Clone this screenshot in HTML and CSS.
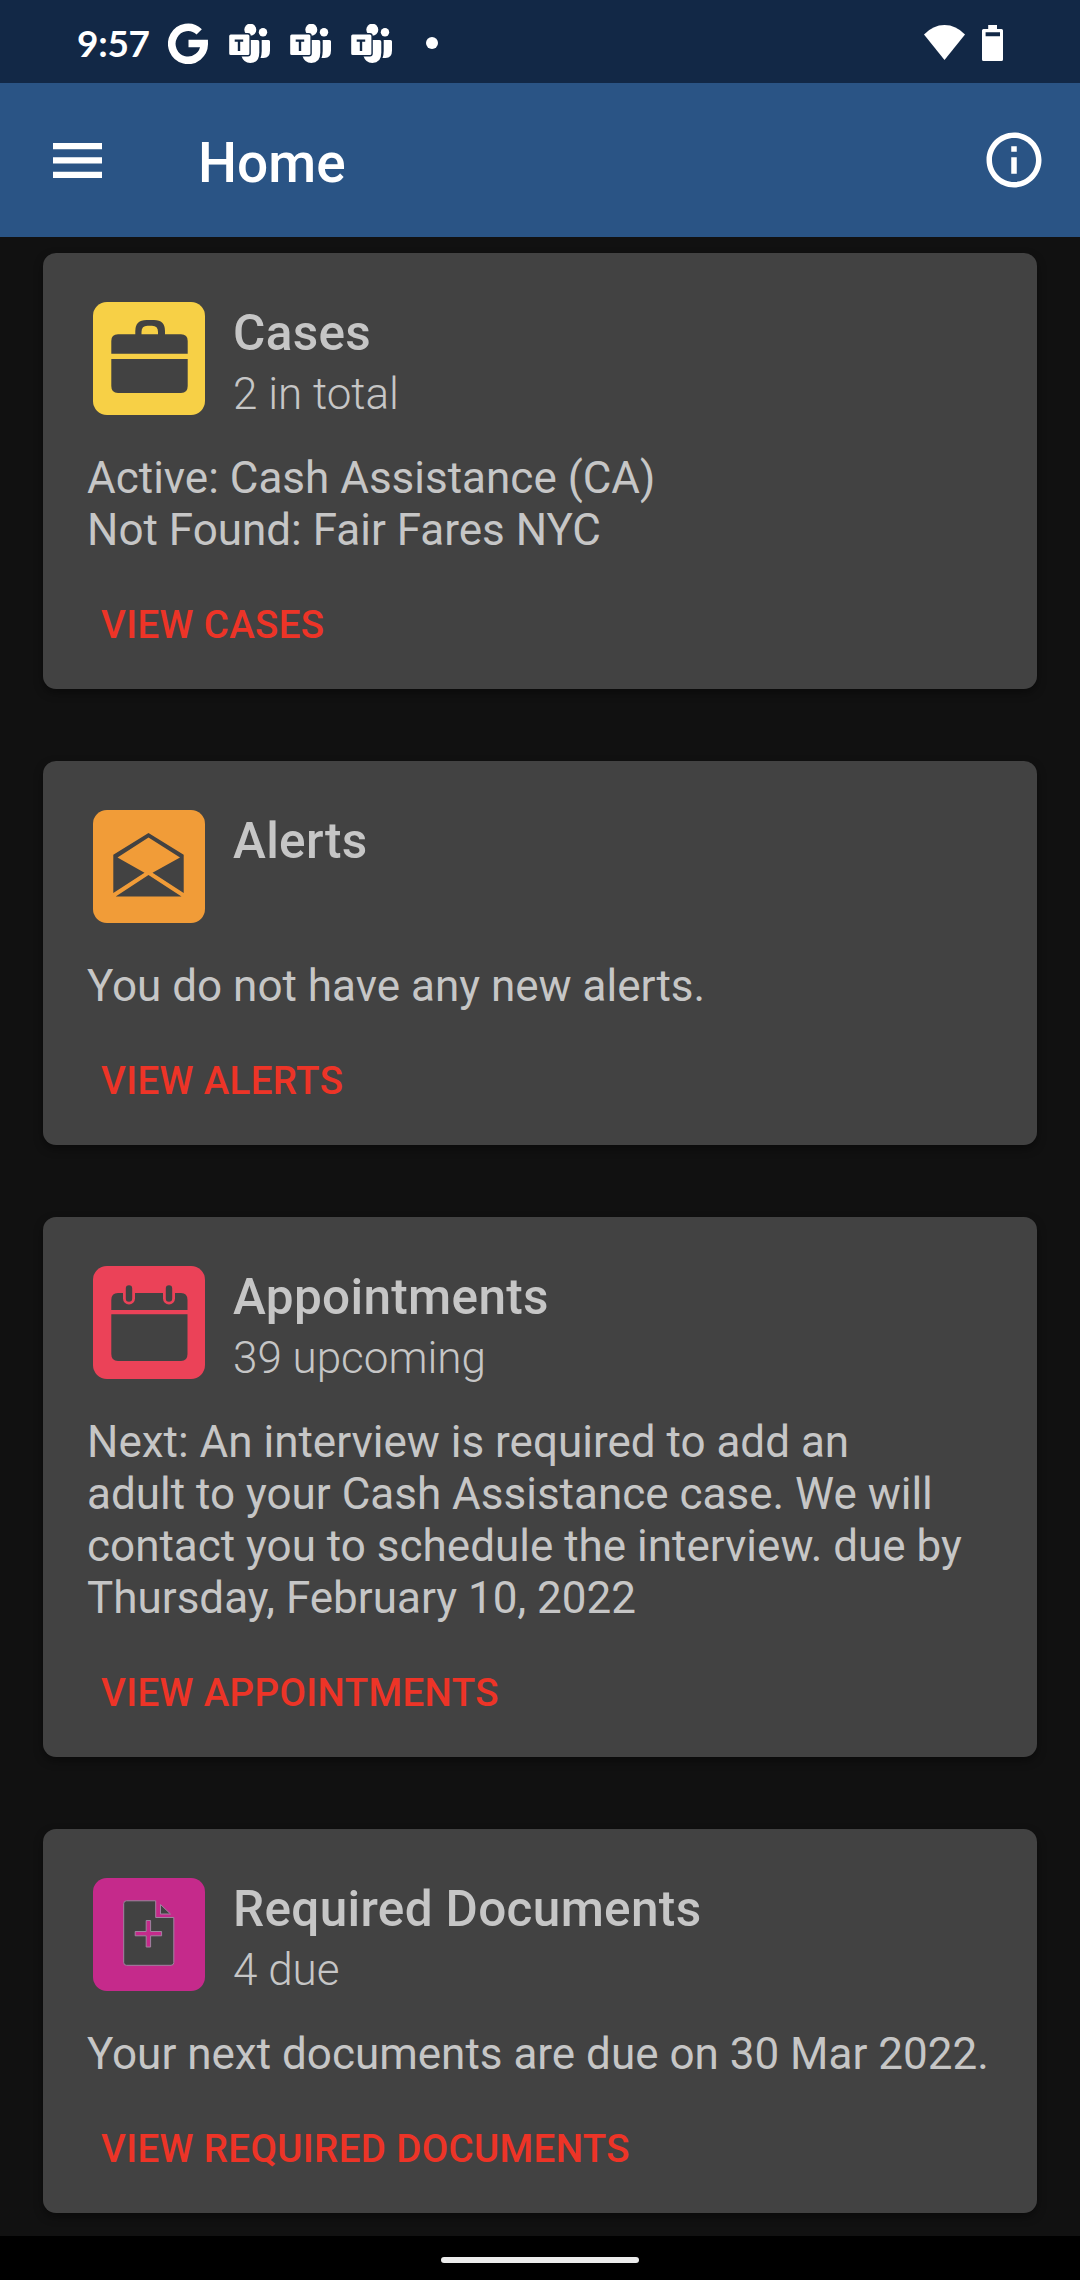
FILE: index.html
```html
<!DOCTYPE html>
<html lang="en">
<head>
<meta charset="utf-8">
<title>Home</title>
<link rel="stylesheet" href="styles.css">
</head>
<body>
<svg width="0" height="0" class="defs">
  <symbol id="teams" viewBox="0 0 41 39">
    <circle cx="21.3" cy="5.7" r="6"/>
    <circle cx="34" cy="8.2" r="4.2"/>
    <path d="M32.7 16H39.5Q41 16 41 17.5V26.5Q41 34 34.5 34H31.5Q32.7 31 32.7 27Z"/>
    <path d="M12 16H28.5Q30.3 16 30.3 17.8V28.5Q30.3 39 21.3 39Q14.5 39 12 31Z"/>
    <rect class="badge" x="-.5" y="9.8" width="21.6" height="22" rx="2.2"/>
    <path class="badge-mark" d="M5.7 16.6H14.2M10 16.6V27"/>
  </symbol>
</svg>
<div class="screen">
  <header class="status">
    <span class="time">9:57</span>
    <svg class="google" viewBox="0 0 40 41"><path d="M31.2 8.9A16.2 16.5 0 1 0 36.2 20.5H20.5"/></svg>
    <svg class="teams"><use href="#teams"/></svg>
    <svg class="teams"><use href="#teams"/></svg>
    <svg class="teams"><use href="#teams"/></svg>
    <span class="dot"></span>
    <svg class="wifi" viewBox="0 0 41 35"><path d="M0 9.5Q9 0 20.5 0T41 9.5L20.5 35Z"/></svg>
    <svg class="battery" viewBox="0 0 21 36"><path fill-rule="evenodd" d="M6.2 0H15V4H19.5Q21 4 21 5.5V34.5Q21 36 19.5 36H1.5Q0 36 0 34.5V5.5Q0 4 1.5 4H6.2ZM3.6 7.2V11.3H18V7.2Z"/></svg>
  </header>
  <nav class="appbar">
    <svg class="menu" viewBox="0 0 49 35"><path d="M0 0H49V6.3H0ZM0 14.3H49V20.6H0ZM0 28.7H49V35H0Z"/></svg>
    <h1>Home</h1>
    <svg class="info" viewBox="0 0 24 24"><path d="M11 7h2v2h-2zm0 4h2v6h-2zm1-9C6.480 2 2 6.480 2 12s4.480 10 10 10 10-4.480 10-10S17.520 2 12 2zm0 18c-4.410 0-8-3.590-8-8s3.590-8 8-8 8 3.590 8 8-3.590 8-8 8z"/></svg>
  </nav>
  <main class="cards">
    <section class="card">
      <div class="head">
        <svg class="icon" viewBox="0 0 112 113">
          <rect class="yellow" width="112" height="113" rx="14"/>
          <path class="cut" fill-rule="evenodd" d="M18.300 51.700V39Q18.300 32.300 25 32.300H42.300V29Q42.300 18 53.500 18H61Q72 18 72 29V32.300H88Q94.700 32.300 94.700 39V51.700ZM48.500 32.300H65V30Q65 23.700 59 23.700H54.500Q48.500 23.700 48.500 30ZM18.300 57H94.700V84Q94.700 91 88 91H25Q18.300 91 18.300 84Z"/>
        </svg>
        <div><h2>Cases</h2><p class="sub">2 in total</p></div>
      </div>
      <p class="text">Active: Cash Assistance (CA)<br>Not Found: Fair Fares NYC</p>
      <a class="action">VIEW CASES</a>
    </section>
    <section class="card">
      <div class="head">
        <svg class="icon" viewBox="0 0 112 113">
          <rect class="orange" width="112" height="113" rx="14"/>
          <path class="cut" d="M55.500 23 90.700 44.800V83L59.500 62.800 87 47.500 55.500 27.600 24.500 47.500 51.500 62.800 20.300 83V44.800ZM55.500 65 88.500 86.500H22.700Z"/>
        </svg>
        <div><h2>Alerts</h2></div>
      </div>
      <p class="text">You do not have any new alerts.</p>
      <a class="action">VIEW ALERTS</a>
    </section>
    <section class="card">
      <div class="head">
        <svg class="icon" viewBox="0 0 112 113">
          <rect class="pink" width="112" height="113" rx="14"/>
          <path class="cut" d="M18.300 44V34Q18.300 27 25 27H88Q94.500 27 94.500 34V44ZM18.300 48.300H94.500V88Q94.500 95 88 95H25Q18.300 95 18.300 88Z"/>
          <path class="ring-gap" d="M36 22.500V32.500M76 22.500V32.500"/>
          <path class="ring" d="M36 22.500V32.500M76 22.500V32.500"/>
        </svg>
        <div><h2>Appointments</h2><p class="sub">39 upcoming</p></div>
      </div>
      <p class="text">Next: An interview is required to add an<br>adult to your Cash Assistance case. We will<br>contact you to schedule the interview. due by<br>Thursday, February 10, 2022</p>
      <a class="action">VIEW APPOINTMENTS</a>
    </section>
    <section class="card">
      <div class="head">
        <svg class="icon" viewBox="0 0 112 113">
          <rect class="magenta" width="112" height="113" rx="14"/>
          <path class="cut outline" d="M33.500 22.800H62.700V39.500H80.800V84.500Q80.800 87.300 78 87.300H33.500Q30.700 87.300 30.700 84.500V25.600Q30.700 22.800 33.500 22.800ZM67.500 26.500 77.500 36H67.500Z"/>
          <path class="magenta outline" d="M53.200 42.500H57.600V53.500H68.600V57.800H57.600V69H53.200V57.800H42.200V53.500H53.200Z"/>
        </svg>
        <div><h2>Required Documents</h2><p class="sub">4 due</p></div>
      </div>
      <p class="text">Your next documents are due on 30 Mar 2022.</p>
      <a class="action">VIEW REQUIRED DOCUMENTS</a>
    </section>
  </main>
  <footer class="navbar"><span class="handle"></span></footer>
</div>
</body>
</html>
```
FILE: styles.css
```css
* { box-sizing: border-box; margin: 0; padding: 0; }
body { background: #111; font-family: Roboto, "Liberation Sans", sans-serif; color: #c6c6c6; }
.defs { position: absolute; }
.screen { width: 1080px; height: 2280px; display: flex; flex-direction: column; overflow: hidden; }
svg { display: block; flex: none; fill: #fff; }

.status { height: 83px; flex: none; background: #122846; display: flex; align-items: flex-start; padding: 24px 77px 0; }
.time { width: 91px; font: 700 37px/38px Lato, sans-serif; letter-spacing: -.3px; color: #fff; white-space: nowrap; }
.google { width: 40px; height: 41px; margin: -1px 21px 0 0; }
.google path { fill: none; stroke: #fff; stroke-width: 7.6; }
.teams { width: 41px; height: 39px; margin-right: 20px; }
.badge { stroke: #122846; stroke-width: 1.4; }
.badge-mark { fill: none; stroke: #122846; stroke-width: 2.4; }
.dot { width: 12px; height: 12px; border-radius: 50%; background: #fff; margin: 13px 0 0 14px; }
.wifi { width: 41px; height: 35px; margin: 1px 17px 0 auto; }
.battery { width: 21px; height: 36px; margin-top: 1px; }

.appbar { height: 154px; flex: none; background: #2a5485; display: flex; align-items: center; padding: 0 33px 0 53px; }
.menu { width: 49px; height: 35px; }
.appbar h1 { flex: 1; margin: 5px 0 0 96px; font-size: 55px; line-height: 64px; font-weight: 500; color: #fff; }
.info { width: 66px; height: 66px; }

.cards { flex: 1; display: flex; flex-direction: column; gap: 72px; padding: 16px 43px 0; }
.card { display: flex; flex-direction: column; align-items: flex-start; padding: 49px 44px 42px; border-radius: 13px; background: #424242; box-shadow: 0 4px 10px rgba(0,0,0,.4); }
.head { display: flex; height: 150px; gap: 28px; padding-left: 6px; }
.icon { width: 112px; height: 113px; }
.head h2 { margin-top: 2px; font-size: 49.5px; line-height: 58px; font-weight: 500; letter-spacing: .33px; }
.sub { margin-top: 6px; font-size: 44px; line-height: 52px; font-weight: 300; }
.text { font-size: 44px; line-height: 52px; white-space: nowrap; }
.action { margin: 46px 0 0 14px; font-size: 38.5px; line-height: 45px; font-weight: 500; letter-spacing: .35px; color: #ed3427; }

.yellow { fill: #f7d046; }
.orange { fill: #f19c38; }
.pink { fill: #eb4258; }
.magenta { fill: #c52a8b; }
.cut { fill: #424242; }
.ring { fill: none; stroke: #424242; stroke-width: 6.4; stroke-linecap: round; }
.ring-gap { fill: none; stroke: #eb4258; stroke-width: 12; stroke-linecap: round; }
.outline { stroke: #a183a0; stroke-width: 1; }

.navbar { height: 44px; flex: none; background: #000; display: flex; justify-content: center; padding-top: 21px; }
.handle { width: 198px; height: 6px; border-radius: 3px; background: #ebebeb; }
```
